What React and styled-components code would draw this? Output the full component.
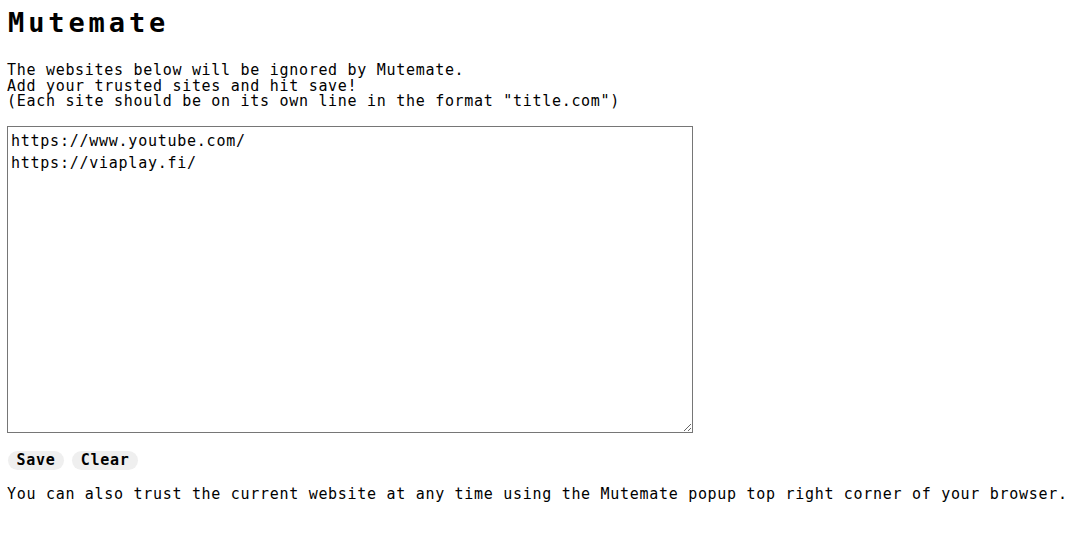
import styled, { createGlobalStyle } from "styled-components";

const GlobalStyle = createGlobalStyle`
  body {
    margin: 0;
    padding: 0 8px;
    background: #ffffff;
    color: #000000;
    font-family: "DejaVu Sans Mono", "Liberation Mono", monospace;
  }
`;

const Page = styled.main`
  display: flex;
  flex-direction: column;
  align-items: flex-start;
`;

const Title = styled.h1`
  margin: 7px 0 0 0;
  font-size: 27px;
  line-height: 32px;
  letter-spacing: 3.9px;
  font-weight: bold;
`;

const Intro = styled.p`
  margin: 24px 0 0 -1px;
  font-size: 15px;
  line-height: 15.5px;
  letter-spacing: 0.7px;
  white-space: pre-line;
`;

const SiteList = styled.textarea`
  box-sizing: border-box;
  margin: 16px 0 0 -1px;
  width: 686px;
  height: 307px;
  padding: 3px 3px 2px;
  border: 1px solid #767676;
  border-radius: 0;
  font-family: inherit;
  font-size: 15px;
  line-height: 22px;
  letter-spacing: 0.75px;
  color: #000000;
  resize: both;
  outline: none;
`;

const Actions = styled.div`
  display: flex;
  gap: 8px;
  margin-top: 18px;
`;

const Button = styled.button`
  height: 19px;
  padding: 0 8.5px;
  border: none;
  border-radius: 10px;
  background: #efefef;
  color: #000000;
  font-family: inherit;
  font-size: 15px;
  font-weight: bold;
  letter-spacing: 0.75px;
  cursor: pointer;

  &:hover {
    background: #e5e5e5;
  }
`;

const Note = styled.p`
  margin: 17px 0 0 -1px;
  font-size: 15px;
  line-height: 15.5px;
  letter-spacing: 0.7px;
  white-space: nowrap;
`;

const App = () => {
  return (
    <Page>
      <GlobalStyle />
      <Title>Mutemate</Title>
      <Intro>
        {`The websites below will be ignored by Mutemate.
Add your trusted sites and hit save!
(Each site should be on its own line in the format "title.com")`}
      </Intro>
      <SiteList
        defaultValue={"https://www.youtube.com/\nhttps://viaplay.fi/"}
        spellCheck={false}
      />
      <Actions>
        <Button type="button">Save</Button>
        <Button type="button">Clear</Button>
      </Actions>
      <Note>
        You can also trust the current website at any time using the Mutemate
        popup top right corner of your browser.
      </Note>
    </Page>
  );
};

export default App;
